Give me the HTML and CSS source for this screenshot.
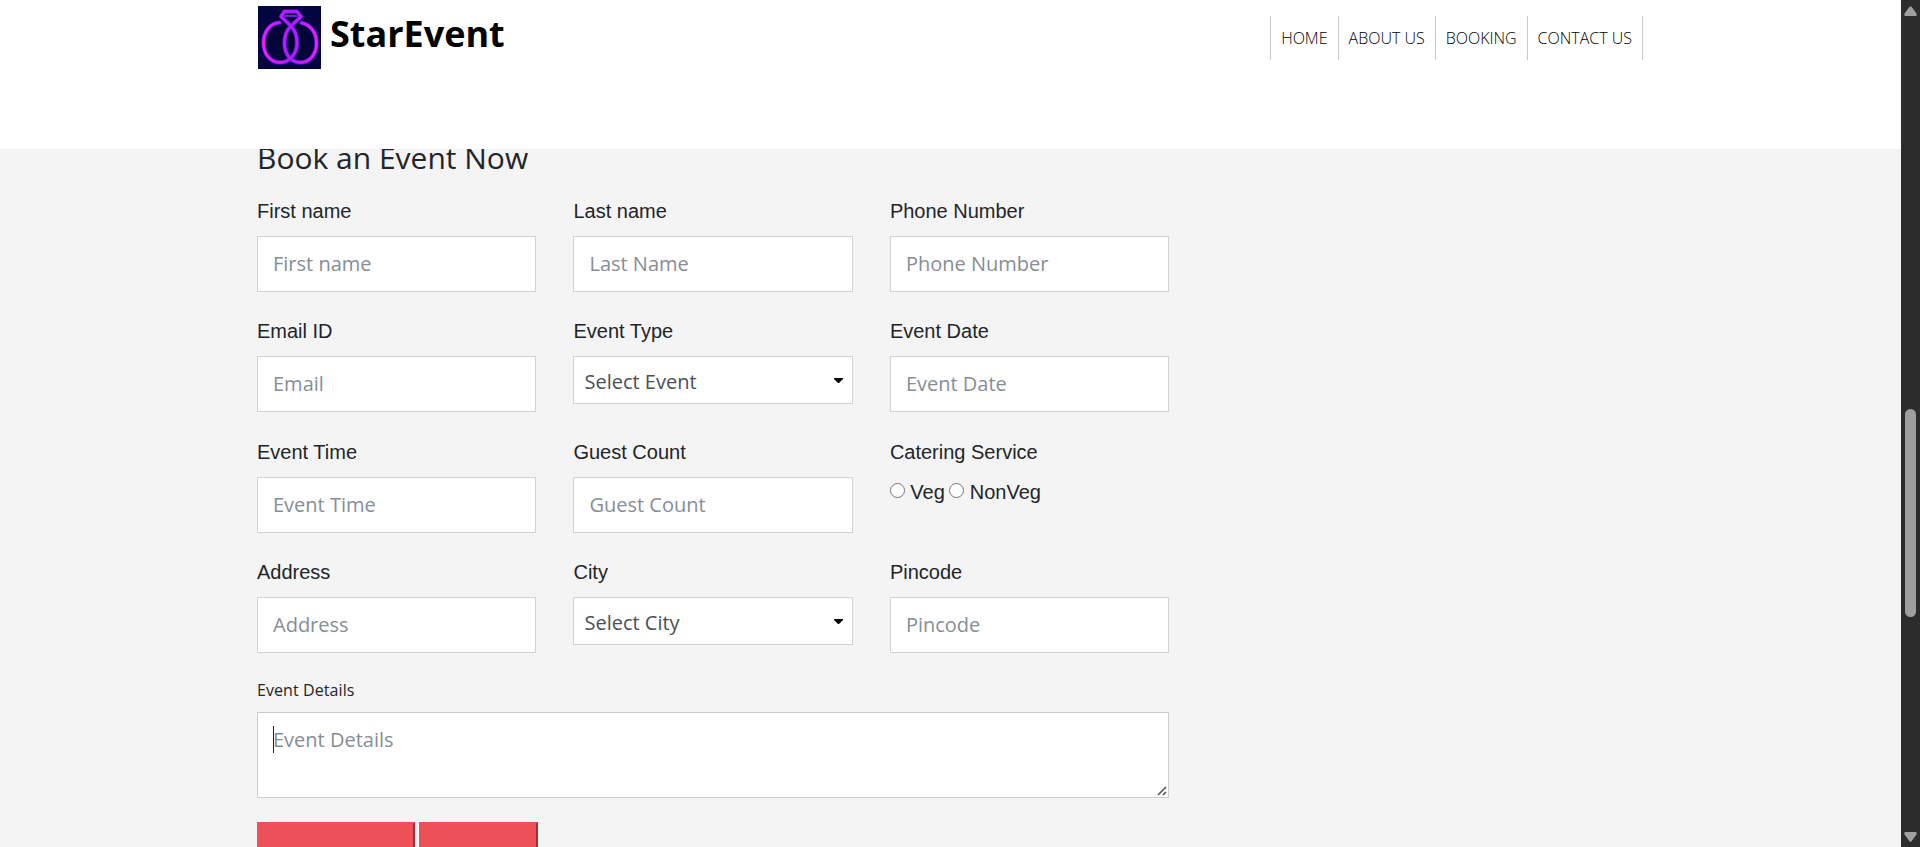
FILE: index.html
```html
<!DOCTYPE html>
<html lang="en">
<head>
<meta charset="utf-8">
<title>StarEvent</title>
<link rel="stylesheet" href="styles.css">
</head>
<body>
<div class="page">
  <header class="header">
    <a class="brand">
      <svg class="logo" viewBox="0 0 63 63" width="63" height="63">
        <defs>
          <linearGradient id="neon" gradientUnits="userSpaceOnUse" x1="4" x2="60" y1="0" y2="0">
            <stop offset="0" stop-color="#fb1af0"/><stop offset=".35" stop-color="#c91af0"/><stop offset=".5" stop-color="#b01af5"/><stop offset=".7" stop-color="#c91af0"/><stop offset="1" stop-color="#fb1af0"/>
          </linearGradient>
          <radialGradient id="night"><stop offset="0" stop-color="#02042c"/><stop offset="1" stop-color="#020540"/></radialGradient>
        </defs>
        <rect width="63" height="63" fill="url(#night)"/>
        <g fill="none" stroke-linecap="round" stroke-linejoin="round">
          <path d="M21.500 16.600C12 17 5.500 26 5.500 37C5.500 48 12.500 56.500 22 56.500C32 56.500 39 47.500 39 37C39 29.500 36.500 23.500 32.500 19.500L23 10.500L26.500 5.500H39L43 10.500L32.500 20.500C28.500 24.500 26.500 30 26.500 37C26.500 48 33 56.500 42.500 56.500C52 56.500 58.500 48 58.500 37C58.500 26 52 18.500 43.500 16.800" stroke="#4a16dc" stroke-width="4.400"/>
          <path d="M21.500 16.600C12 17 5.500 26 5.500 37C5.500 48 12.500 56.500 22 56.500C32 56.500 39 47.500 39 37C39 29.500 36.500 23.500 32.500 19.500L23 10.500L26.500 5.500H39L43 10.500L32.500 20.500C28.500 24.500 26.500 30 26.500 37C26.500 48 33 56.500 42.500 56.500C52 56.500 58.500 48 58.500 37C58.500 26 52 18.500 43.500 16.800" stroke="url(#neon)" stroke-width="2.800"/>
          <path d="M26.500 10H39.500" stroke="#7417e4" stroke-width="1.800"/>
        </g>
      </svg>
      <span class="brand-name">StarEvent</span>
    </a>
    <nav class="nav">
      <a>HOME</a><a>ABOUT US</a><a>BOOKING</a><a>CONTACT US</a>
    </nav>
  </header>
  <main class="booking">
    <h2 class="title">Book an Event Now</h2>
    <form class="form">
      <div class="grid">
        <div class="field"><label>First name</label><input class="control" placeholder="First name"></div>
        <div class="field"><label>Last name</label><input class="control" placeholder="Last Name"></div>
        <div class="field"><label>Phone Number</label><input class="control" placeholder="Phone Number"></div>
        <div class="field"><label>Email ID</label><input class="control" placeholder="Email"></div>
        <div class="field"><label>Event Type</label>
          <div class="select"><span>Select Event</span><svg width="9" height="5" viewBox="0 0 9 5"><path d="M0 0H9V1L5 5H4L0 1Z"/></svg></div></div>
        <div class="field"><label>Event Date</label><input class="control" placeholder="Event Date"></div>
        <div class="field"><label>Event Time</label><input class="control" placeholder="Event Time"></div>
        <div class="field"><label>Guest Count</label><input class="control" placeholder="Guest Count"></div>
        <div class="field"><label>Catering Service</label>
          <div class="radios"><input class="radio" type="radio"><span class="veg">Veg</span><input class="radio" type="radio"><span>NonVeg</span></div></div>
        <div class="field"><label>Address</label><input class="control" placeholder="Address"></div>
        <div class="field"><label>City</label>
          <div class="select"><span>Select City</span><svg width="9" height="5" viewBox="0 0 9 5"><path d="M0 0H9V1L5 5H4L0 1Z"/></svg></div></div>
        <div class="field"><label>Pincode</label><input class="control" placeholder="Pincode"></div>
      </div>
      <label class="details-label">Event Details</label>
      <div class="details">
        <textarea class="details-text" placeholder="Event Details"></textarea>
        <i class="caret"></i>
        <svg class="grip" width="10" height="10" viewBox="0 0 10 10"><path d="M1 9L9 1M6 9L9 6" stroke="#555" stroke-width="1.700"/></svg>
      </div>
      <div class="buttons"><button class="btn btn-wide" type="button"></button><button class="btn" type="button"></button></div>
    </form>
  </main>
</div>
<aside class="scrollbar">
  <svg width="13" height="10" viewBox="0 0 13 10"><path d="M5.500 .8Q6.500 -.3 7.500 .8L12.500 7.500Q13.200 10 11.500 10H1.500Q-.2 10 .5 7.500Z" fill="#9f9f9f"/></svg>
  <div class="thumb"></div>
  <svg class="down" width="13" height="10" viewBox="0 0 13 10"><path d="M5.500 9.200Q6.500 10.300 7.500 9.200L12.500 2.500Q13.200 0 11.500 0H1.500Q-.2 0 .5 2.500Z" fill="#9f9f9f"/></svg>
</aside>
</body>
</html>
```

FILE: styles.css
```css
* { box-sizing: border-box; }
body {
  margin: 0;
  height: 847px;
  display: flex;
  overflow: hidden;
  background: #f4f4f4;
  color: #212529;
  font-family: "Open Sans", sans-serif;
}
.page { flex: 1; height: 847px; overflow: hidden; }
.header {
  height: 149px;
  padding: 6px 258px 0;
  background: #fff;
  display: flex;
  justify-content: space-between;
  align-items: flex-start;
  position: relative;
  z-index: 1;
}
.brand { display: flex; gap: 9px; color: #000; }
.logo { display: block; }
.brand-name { font-size: 36px; font-weight: 700; line-height: 56px; }
.nav { display: flex; margin-top: 10px; border-left: 1px solid #c8c8c8; }
.nav a {
  padding: 0 10px;
  border-right: 1px solid #c8c8c8;
  font-size: 16px;
  font-weight: 300;
  line-height: 44px;
  color: #000;
}
.booking { padding-left: 257px; }
.title { margin: -11px 0 0; font-size: 30px; font-weight: 400; line-height: 40px; }
.form { width: 912px; padding-top: 18px; }
.grid {
  display: grid;
  grid-template-columns: repeat(3, 279.250px);
  column-gap: 37.200px;
  grid-auto-rows: 120.400px;
}
.field label {
  display: block;
  height: 40px;
  font: 20px/30px "Liberation Sans", Arial, sans-serif;
}
.control {
  display: block;
  width: 100%;
  height: 56px;
  padding: 0 15px 1.400px;
  border: 1px solid #ced4da;
  border-radius: 0;
  background: #fff;
  font: 20px "Open Sans", sans-serif;
}
.control::placeholder, .details-text::placeholder { color: #868e96; opacity: 1; }
.select {
  height: 48px;
  padding: 0 9px 0 10px;
  border: 1px solid #ced4da;
  background: #fff;
  color: #495057;
  font-size: 20px;
  display: flex;
  align-items: center;
  justify-content: space-between;
}
.select span { margin-top: 3px; }
.radios {
  display: flex;
  align-items: center;
  height: 30px;
  font: 20px/30px "Liberation Sans", Arial, sans-serif;
}
.radio {
  appearance: none;
  width: 15px;
  height: 15px;
  margin: 0 5.400px 2px 0;
  border: 1px solid #767676;
  border-radius: 50%;
  background: #fff;
}
.veg { margin-right: 4.600px; }
.details-label { display: block; height: 34px; font-size: 16px; line-height: 24px; letter-spacing: .08px; }
.details { position: relative; width: 912px; height: 86px; }
.details-text {
  display: block;
  width: 100%;
  height: 100%;
  padding: 12px 15px;
  border: 1px solid #ccc;
  resize: none;
  font: 20px/30px "Open Sans", sans-serif;
}
.caret { position: absolute; left: 16px; top: 14px; width: 1px; height: 27px; background: #222; }
.grip { position: absolute; right: 2px; bottom: 2px; }
.buttons { display: flex; gap: 4px; margin-top: 24px; }
.btn {
  width: 119px;
  height: 50px;
  padding: 0;
  border: 2px solid;
  border-color: #ee5057 #9b3337 #9b3337 #ee5057;
  background: #ee5057;
}
.btn-wide { width: 158px; }
.scrollbar {
  width: 19px;
  height: 847px;
  padding: 6px 0 5px 3px;
  background: #2c2c2c;
  display: flex;
  flex-direction: column;
}
.thumb { width: 11px; height: 208px; margin: 393px 0 0 1px; border-radius: 6px; background: #9f9f9f; }
.down { margin-top: auto; }
```
